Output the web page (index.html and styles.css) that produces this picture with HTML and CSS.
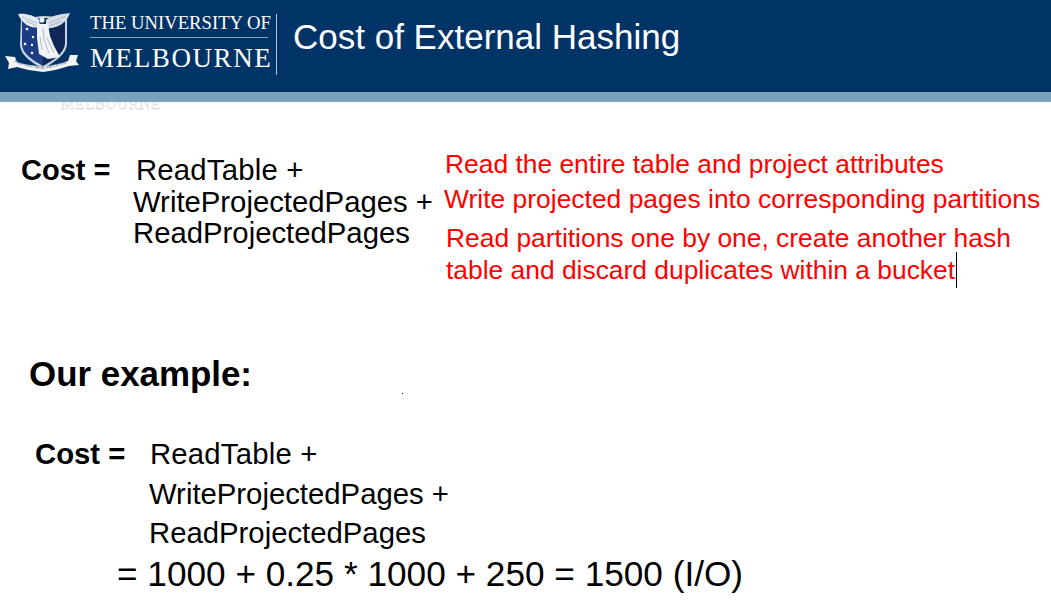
FILE: index.html
```html
<!DOCTYPE html>
<html lang="en">
<head>
<meta charset="utf-8">
<title>Cost of External Hashing</title>
<link rel="stylesheet" href="styles.css">
</head>
<body>
<div class="slide">
  <header class="header">
    <svg class="crest" viewBox="3 10 80 64" width="80" height="64" aria-hidden="true">
      <defs>
        <path id="ribbon-curve" d="M14 62 C26 67 33 68 42 69 C52 68 60 66 72 61"/>
      </defs>
      <path d="M21 19 C30 19 36 16 43 16 C50 16 58 18 67 18 L67 44 C66 56 52 63 43 69 C33 63 20 56 20 44 Z" fill="#c9d2df"/>
      <path d="M22 21 C30 21 36 18 43 18 L43 66 C33 60 22 54 22 44 Z" fill="#1d3c86"/>
      <path d="M43 18 C50 18 58 20 65 20 L65 44 C64 54 52 61 43 66 Z" fill="#0f2858"/>
      <g fill="#fff">
        <circle cx="27" cy="29" r="1.3"/><circle cx="33" cy="37" r="1.2"/><circle cx="25" cy="44" r="1.3"/><circle cx="32" cy="45" r="1.2"/><circle cx="32" cy="53" r="1.3"/>
      </g>
      <path d="M18 14 C25 13 34 15 39 20 L40 27 C33 29 23 26 18 14 Z" fill="#e6ebf2"/>
      <path d="M70 13 C63 14 52 15 46 20 L46 28 C54 29 66 25 70 13 Z" fill="#d8dfe9"/>
      <path d="M22 17 L37 23 M26 21 L37 26 M66 16 L49 23 M62 21 L49 26" stroke="#8c9ab2" stroke-width=".6" fill="none"/>
      <circle cx="42" cy="20" r="2.6" fill="#eef1f5"/>
      <path d="M37 24 L48 24 L50 36 L54 46 L60 57 L48 59 L39 54 L37 38 Z" fill="#f1f3f7"/>
      <path d="M43 28 L44 40 L49 53 M40 37 L42 50 M47 38 L54 53" stroke="#98a4b8" stroke-width=".7" fill="none"/>
      <path d="M5 56 L15 57 L17 62 C25 65 33 65 42 67 C52 65 60 64 68 61 L70 55 L78 55 L76 61 L79 65 L69 66 C60 69 52 71 43 72 C33 71 24 69 17 67 L8 69 L9 63 Z" fill="#f3f5f8"/>
      <text class="motto"><textPath href="#ribbon-curve">POSTERA CRESCAM LAUDE</textPath></text>
    </svg>
    <div class="wordmark">
      <div class="wm-top">THE UNIVERSITY OF</div>
      <div class="wm-bottom">MELBOURNE</div>
    </div>
    <h1 class="title">Cost of External Hashing</h1>
  </header>
  <div class="band"></div>
  <div class="ghost">MELBOURNE</div>

  <div class="box cost-a">
    <b class="label">Cost =</b>
    <div class="line l1">ReadTable +</div>
    <div class="line l2">WriteProjectedPages +</div>
    <div class="line l3">ReadProjectedPages</div>
  </div>

  <div class="box note n1">Read the entire table and project attributes</div>
  <div class="box note n2">Write projected pages into corresponding partitions</div>
  <div class="box note n3">Read partitions one by one, create another hash<br>table and discard duplicates within a bucket<span class="caret"></span></div>

  <h2 class="box example">Our example:</h2>
  <span class="box dot"></span>

  <div class="box cost-b">
    <b class="label">Cost =</b>
    <div class="line m1">ReadTable +</div>
    <div class="line m2">WriteProjectedPages +</div>
    <div class="line m3">ReadProjectedPages</div>
    <div class="line m4">= 1000 + 0.25 * 1000 + 250 = 1500 (I/O)</div>
  </div>
</div>
</body>
</html>
```
FILE: styles.css
```css
html, body { margin: 0; padding: 0; background: #fff; }
body { width: 1051px; height: 603px; overflow: hidden; font-family: "Liberation Sans", Arial, sans-serif; color: #000; }
.slide { position: relative; width: 1051px; height: 603px; overflow: hidden; }
.header { position: relative; z-index: 1; display: flex; align-items: flex-start; height: 92px; background: #003366; box-sizing: border-box; padding: 10px 0 0 3px; }
.crest { flex: none; }
.motto { font-family: "Liberation Serif", serif; font-size: 4px; fill: #2a3f66; letter-spacing: .1px; }
.wordmark { flex: none; width: 186px; height: 61px; margin: 4px 0 0 7px; border-right: 1px solid #b9c6d6; color: #fff; font-family: "Liberation Serif", serif; }
.wm-top { font-size: 18.7px; line-height: 20px; padding-bottom: 4px; border-bottom: 1px solid #8fa3bd; white-space: nowrap; width: 178px; margin-top: -1px; }
.wm-bottom { font-size: 27px; line-height: 32px; margin-top: 4px; white-space: nowrap; letter-spacing: 1.6px; }
.title { margin: 6px 0 0 16px; font-size: 35px; line-height: 42px; font-weight: 400; color: #fff; white-space: nowrap; }
.band { position: relative; z-index: 1; height: 10px; background: #7ba2bc; }
.ghost { position: absolute; left: 61px; top: 96px; font-family: "Liberation Serif", serif; font-size: 15px; line-height: 16px; color: #fff; -webkit-text-stroke: .3px #bdbdbd; letter-spacing: .7px; }
.box { position: absolute; margin: 0; white-space: nowrap; }
.cost-a, .cost-b { left: 0; top: 0; width: 100%; font-size: 29.3px; line-height: 32px; }
.label { position: absolute; white-space: nowrap; }
.line { position: absolute; white-space: nowrap; }
.cost-a .label { left: 21px; top: 154px; font-size: 29px; }
.l1 { left: 136px; top: 154px; letter-spacing: .2px; }
.l2 { left: 133px; top: 186px; }
.l3 { left: 133px; top: 217px; }
.note { color: #f00; font-size: 26.4px; line-height: 32px; }
.n1 { left: 445px; top: 148px; }
.n2 { left: 444px; top: 183px; letter-spacing: .02px; }
.n3 { left: 446px; top: 222px; }
.caret { position: absolute; width: 1px; height: 36px; margin: -2px 0 0 1px; background: #000; }
.example { left: 29px; top: 354px; font-size: 34.9px; line-height: 40px; font-weight: 700; }
.dot { left: 402px; top: 393px; width: 1px; height: 1px; background: #333; }
.cost-b .label { left: 35px; top: 438px; font-size: 29.3px; }
.m1 { left: 150px; top: 438px; letter-spacing: .2px; }
.m2 { left: 149px; top: 478px; }
.m3 { left: 149px; top: 517px; }
.m4 { left: 117px; top: 556px; font-size: 35.2px; line-height: 36px; }
```
